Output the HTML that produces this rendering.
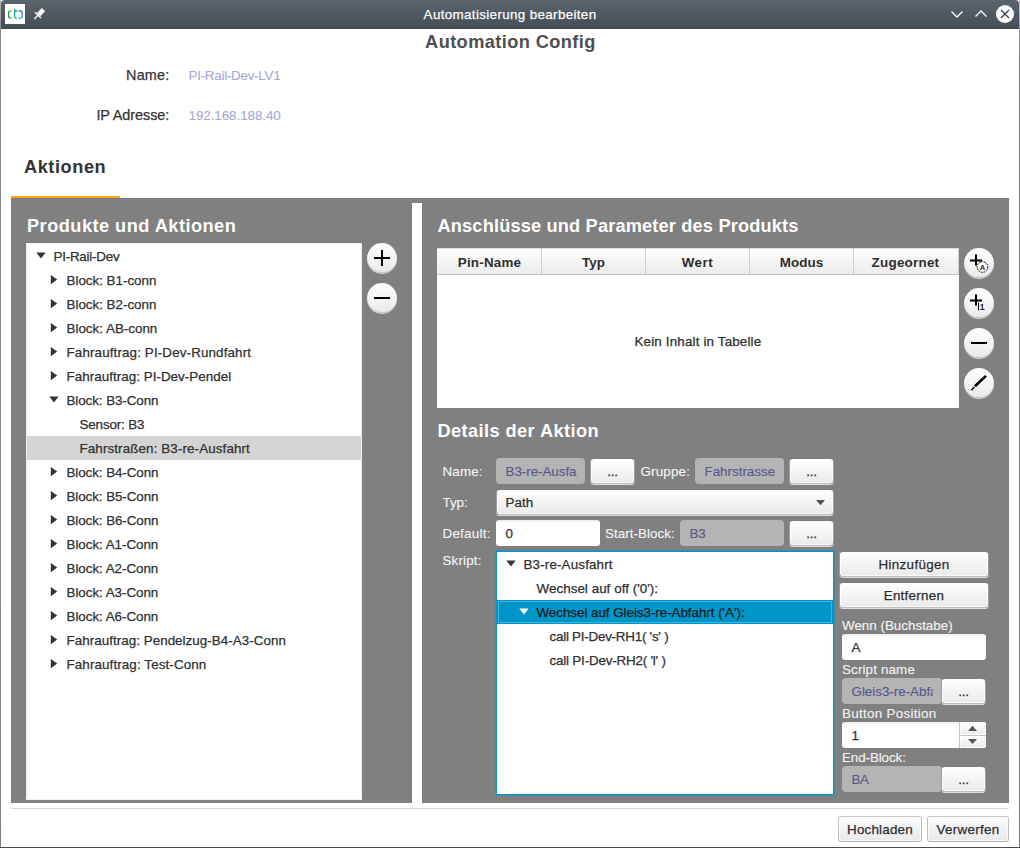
<!DOCTYPE html>
<html lang="de">
<head>
<meta charset="utf-8">
<title>Automatisierung bearbeiten</title>
<style>
*{box-sizing:border-box;margin:0;padding:0}
html,body{width:1020px;height:848px;overflow:hidden;background:#fff}
body{font-family:"Liberation Sans","DejaVu Sans",sans-serif;font-size:13.4px;color:#303030;position:relative}
#win{position:absolute;left:0;top:0;width:1020px;height:848px;background:#fff;overflow:hidden}
#win div,#win span,#win svg,#win button,#win h1,#win h2,#win label,#win output{position:absolute}
header,main,section,nav,footer,form{display:block;position:static}
button{font:inherit;color:inherit;display:block;text-align:left;cursor:default;outline:0;-webkit-appearance:none;appearance:none}
.t{white-space:pre;line-height:20px;height:20px;-webkit-text-stroke:.25px}
.titlebar-bg{left:1px;top:0;width:1018px;height:28px;background:linear-gradient(#5a646c,#464e56);border-radius:4px 4px 0 0}
.split{left:11px;top:198px;width:998px;height:605px;background:#808080}
.divider{left:412px;top:203px;width:10px;height:600px;background:#fff}
.tree{background:#fff}
.row{left:0;height:24px}
.fld{height:26px;border-radius:4px}
.fld.dis{background:#b4b4b4}
.fld.en{background:linear-gradient(#ececec,#fff 3px);border-radius:3px}
.btn{height:26px;border-radius:4px;background:linear-gradient(#ffffff,#f5f5f5 45%,#eaeaea);border:1px solid;border-color:#7c7c7c #9c9c9c #bdbdbd #9c9c9c;box-shadow:0 1px 0 #dedede,inset 1px 0 0 rgba(255,255,255,.9),inset -1px 0 0 rgba(255,255,255,.9),inset 0 -1px 0 rgba(255,255,255,.7)}
.btn.w{border-color:#c8c8c8 #c0c0c0 #b6b6b6 #c0c0c0;box-shadow:inset 0 0 0 1px rgba(255,255,255,.7);background:linear-gradient(#fdfdfd,#f3f3f3 45%,#e9e9e9);border-radius:3px}
.circ{width:30px;height:30px;border:0;border-radius:50%;background:linear-gradient(#ffffff,#f7f7f7 40%,#e9e9e9);box-shadow:0 1px 0 rgba(228,228,228,.95),inset 0 -1px 1px -.5px rgba(110,110,110,.45),0 0 0 .5px rgba(120,120,120,.5)}
.circ svg{left:0;top:0}
.thead{left:0;top:0;width:522px;height:27px;background:linear-gradient(#fdfdfd,#ececec);border-bottom:1px solid #c4c4c4;border-top:1px solid #dcdcdc}
.th{top:0;height:25px;border-right:1px solid #cdcdcd}
.spin-up{left:117px;top:0;width:27px;height:13px;background:linear-gradient(#ffffff,#ececec);border-left:1px solid #c6c6c6;border-radius:0 3px 0 0;box-shadow:inset 0 0 0 1px rgba(255,255,255,.8)}
.spin-sep{left:117px;top:13px;width:27px;height:1px;background:#c6c6c6}
.spin-dn{left:117px;top:14px;width:27px;height:12px;background:linear-gradient(#fdfdfd,#ebebeb);border-left:1px solid #c6c6c6;border-radius:0 0 3px 0;box-shadow:inset 0 0 0 1px rgba(255,255,255,.8)}
</style>
</head>
<body>
<div id="win">

<!-- window title bar -->
<header>
<div class="titlebar-bg"></div>
<div style="left:1px;top:28px;width:1018px;height:1px;background:#3f4951"></div>
<div style="left:5px;top:4px;width:20px;height:20px;background:#fff">
<svg style="left:0;top:0" width="20" height="20" viewBox="0 0 20 20">
<defs><linearGradient id="gG" x1="0" y1="0" x2="1" y2="0"><stop offset="0" stop-color="#2b8a3e"/><stop offset="1" stop-color="#9bcf4a"/></linearGradient>
<linearGradient id="gB" x1="0" y1="0" x2="0" y2="1"><stop offset="0" stop-color="#1763bd"/><stop offset="1" stop-color="#2badea"/></linearGradient></defs>
<path d="M7 6.900H5.600A2 2 0 0 0 3.600 8.900V12.100A2 2 0 0 0 5.600 14.100H7" fill="none" stroke="url(#gG)" stroke-width="1.300"/>
<path d="M9.600 5V12.600A1.500 1.500 0 0 0 11.100 14.100H11.700M9.600 7H12.400" fill="none" stroke="#1f9c8e" stroke-width="1.300"/>
<path d="M13.600 6.900H15.200A2 2 0 0 1 17.200 8.900V12.100A2 2 0 0 1 15.200 14.100H13.200" fill="none" stroke="url(#gB)" stroke-width="1.300"/>
</svg>
</div>
<svg style="left:33px;top:7px" width="14" height="14" viewBox="0 0 14 14">
<path d="M8.900 1.100L12.100 4.200L7.300 9.200L4 6Z" fill="#fcfcfc"/>
<path d="M2 5.300L8 11" stroke="#fcfcfc" stroke-width="1.400"/>
<path d="M5 8.200L1.200 12" stroke="#fcfcfc" stroke-width="1.300"/>
</svg>
<span class="t" style="left:423.6px;top:5.0px;font-size:13.4px;letter-spacing:0.35px;color:#fcfcfc;font-weight:normal">Automatisierung bearbeiten</span>
<svg style="left:945px;top:2px" width="72" height="24" viewBox="0 0 72 24">
<path d="M6.500 9.500L12 15L17.500 9.500" fill="none" stroke="#fcfcfc" stroke-width="1.300"/>
<path d="M30.500 14.500L36 9L41.500 14.500" fill="none" stroke="#fcfcfc" stroke-width="1.300"/>
<circle cx="60" cy="12" r="9" fill="#fcfcfc"/>
<path d="M56 8L64 16M64 8L56 16" stroke="#3b4249" stroke-width="1.300"/>
</svg>
</header>
<!-- window frame edges -->
<div style="left:0;top:0;width:1px;height:848px;background:linear-gradient(#bdbdbd,#8a8a8a 30px,#808080)"></div>
<div style="left:1019px;top:0;width:1px;height:848px;background:linear-gradient(#c4c4c4,#9a9a9a 28px,#7c7c7c 60px,#7c7c7c)"></div>
<div style="left:0;top:847px;width:1020px;height:1px;background:#4a4a4a"></div>

<main>
<!-- dialog header -->
<section>
<h1 class="t" style="left:425.1px;top:31.5px;font-size:18.2px;letter-spacing:0.41px;color:#4f4f4f;font-weight:bold;-webkit-text-stroke:0px">Automation Config</h1>
<label class="t" style="left:126.1px;top:65.0px;font-size:14.4px;letter-spacing:0.17px;color:#333;font-weight:normal">Name:</label>
<output class="t" style="left:188.5px;top:66.0px;font-size:13.4px;letter-spacing:-0.26px;color:#a8a8d4;font-weight:normal;-webkit-text-stroke:0.1px">PI-Rail-Dev-LV1</output>
<label class="t" style="left:96.4px;top:105.0px;font-size:14.4px;letter-spacing:-0.04px;color:#333;font-weight:normal">IP Adresse:</label>
<output class="t" style="left:188.5px;top:106.0px;font-size:13.4px;letter-spacing:-0.06px;color:#a8a8d4;font-weight:normal;-webkit-text-stroke:0.1px">192.168.188.40</output>
</section>

<!-- tab header -->
<nav>
<span class="t" style="left:24.0px;top:157.0px;font-size:18.2px;letter-spacing:0.55px;color:#333;font-weight:bold;-webkit-text-stroke:0px">Aktionen</span>
<div style="left:11px;top:196px;width:109px;height:2px;background:#fba30a"></div>
</nav>

<!-- split pane -->
<div class="split"></div>
<div class="divider"></div>

<!-- left: product tree -->
<section>
<h2 class="t" style="left:27.0px;top:216.0px;font-size:18.2px;letter-spacing:0.47px;color:#fff;font-weight:bold;-webkit-text-stroke:0px">Produkte und Aktionen</h2>
<div class="tree" style="left:26px;top:243px;width:336px;height:557px;border:1px solid #f0f0f0">
<div class="row" style="top:0px;width:334px">
<svg width="12" height="13" style="left:8px;top:5px"><path d="M1.300 3.600H10.600L5.950 9.500Z" fill="#333"/></svg>
<span class="t" style="left:26.5px;top:3.0px;font-size:13.4px;letter-spacing:-0.23px;color:#303030;font-weight:normal">PI-Rail-Dev</span>
</div>
<div class="row" style="top:24px;width:334px">
<svg width="12" height="13" style="left:21px;top:5px"><path d="M2.800 1.900V11.200L9.200 6.550Z" fill="#333"/></svg>
<span class="t" style="left:39.5px;top:3.0px;font-size:13.4px;letter-spacing:-0.01px;color:#303030;font-weight:normal">Block: B1-conn</span>
</div>
<div class="row" style="top:48px;width:334px">
<svg width="12" height="13" style="left:21px;top:5px"><path d="M2.800 1.900V11.200L9.200 6.550Z" fill="#333"/></svg>
<span class="t" style="left:39.5px;top:3.0px;font-size:13.4px;letter-spacing:-0.01px;color:#303030;font-weight:normal">Block: B2-conn</span>
</div>
<div class="row" style="top:72px;width:334px">
<svg width="12" height="13" style="left:21px;top:5px"><path d="M2.800 1.900V11.200L9.200 6.550Z" fill="#333"/></svg>
<span class="t" style="left:39.5px;top:3.0px;font-size:13.4px;letter-spacing:0.00px;color:#303030;font-weight:normal">Block: AB-conn</span>
</div>
<div class="row" style="top:96px;width:334px">
<svg width="12" height="13" style="left:21px;top:5px"><path d="M2.800 1.900V11.200L9.200 6.550Z" fill="#333"/></svg>
<span class="t" style="left:39.5px;top:3.0px;font-size:13.4px;letter-spacing:0.13px;color:#303030;font-weight:normal">Fahrauftrag: PI-Dev-Rundfahrt</span>
</div>
<div class="row" style="top:120px;width:334px">
<svg width="12" height="13" style="left:21px;top:5px"><path d="M2.800 1.900V11.200L9.200 6.550Z" fill="#333"/></svg>
<span class="t" style="left:39.5px;top:3.0px;font-size:13.4px;letter-spacing:0.04px;color:#303030;font-weight:normal">Fahrauftrag: PI-Dev-Pendel</span>
</div>
<div class="row" style="top:144px;width:334px">
<svg width="12" height="13" style="left:21px;top:5px"><path d="M1.300 3.600H10.600L5.950 9.500Z" fill="#333"/></svg>
<span class="t" style="left:39.5px;top:3.0px;font-size:13.4px;letter-spacing:-0.08px;color:#303030;font-weight:normal">Block: B3-Conn</span>
</div>
<div class="row" style="top:168px;width:334px">
<span class="t" style="left:52.5px;top:3.0px;font-size:13.4px;letter-spacing:-0.15px;color:#303030;font-weight:normal">Sensor: B3</span>
</div>
<div class="row" style="top:192px;width:334px;background:#d4d4d4">
<span class="t" style="left:52.5px;top:3.0px;font-size:13.4px;letter-spacing:0.11px;color:#303030;font-weight:normal">Fahrstraßen: B3-re-Ausfahrt</span>
</div>
<div class="row" style="top:216px;width:334px">
<svg width="12" height="13" style="left:21px;top:5px"><path d="M2.800 1.900V11.200L9.200 6.550Z" fill="#333"/></svg>
<span class="t" style="left:39.5px;top:3.0px;font-size:13.4px;letter-spacing:-0.08px;color:#303030;font-weight:normal">Block: B4-Conn</span>
</div>
<div class="row" style="top:240px;width:334px">
<svg width="12" height="13" style="left:21px;top:5px"><path d="M2.800 1.900V11.200L9.200 6.550Z" fill="#333"/></svg>
<span class="t" style="left:39.5px;top:3.0px;font-size:13.4px;letter-spacing:-0.08px;color:#303030;font-weight:normal">Block: B5-Conn</span>
</div>
<div class="row" style="top:264px;width:334px">
<svg width="12" height="13" style="left:21px;top:5px"><path d="M2.800 1.900V11.200L9.200 6.550Z" fill="#333"/></svg>
<span class="t" style="left:39.5px;top:3.0px;font-size:13.4px;letter-spacing:-0.08px;color:#303030;font-weight:normal">Block: B6-Conn</span>
</div>
<div class="row" style="top:288px;width:334px">
<svg width="12" height="13" style="left:21px;top:5px"><path d="M2.800 1.900V11.200L9.200 6.550Z" fill="#333"/></svg>
<span class="t" style="left:39.5px;top:3.0px;font-size:13.4px;letter-spacing:-0.04px;color:#303030;font-weight:normal">Block: A1-Conn</span>
</div>
<div class="row" style="top:312px;width:334px">
<svg width="12" height="13" style="left:21px;top:5px"><path d="M2.800 1.900V11.200L9.200 6.550Z" fill="#333"/></svg>
<span class="t" style="left:39.5px;top:3.0px;font-size:13.4px;letter-spacing:-0.04px;color:#303030;font-weight:normal">Block: A2-Conn</span>
</div>
<div class="row" style="top:336px;width:334px">
<svg width="12" height="13" style="left:21px;top:5px"><path d="M2.800 1.900V11.200L9.200 6.550Z" fill="#333"/></svg>
<span class="t" style="left:39.5px;top:3.0px;font-size:13.4px;letter-spacing:-0.04px;color:#303030;font-weight:normal">Block: A3-Conn</span>
</div>
<div class="row" style="top:360px;width:334px">
<svg width="12" height="13" style="left:21px;top:5px"><path d="M2.800 1.900V11.200L9.200 6.550Z" fill="#333"/></svg>
<span class="t" style="left:39.5px;top:3.0px;font-size:13.4px;letter-spacing:-0.04px;color:#303030;font-weight:normal">Block: A6-Conn</span>
</div>
<div class="row" style="top:384px;width:334px">
<svg width="12" height="13" style="left:21px;top:5px"><path d="M2.800 1.900V11.200L9.200 6.550Z" fill="#333"/></svg>
<span class="t" style="left:39.5px;top:3.0px;font-size:13.4px;letter-spacing:0.04px;color:#303030;font-weight:normal">Fahrauftrag: Pendelzug-B4-A3-Conn</span>
</div>
<div class="row" style="top:408px;width:334px">
<svg width="12" height="13" style="left:21px;top:5px"><path d="M2.800 1.900V11.200L9.200 6.550Z" fill="#333"/></svg>
<span class="t" style="left:39.5px;top:3.0px;font-size:13.4px;letter-spacing:0.11px;color:#303030;font-weight:normal">Fahrauftrag: Test-Conn</span>
</div>
</div>
<button type="button" class="circ" title="+" style="left:367px;top:243px"><svg width="30" height="30"><path d="M7 15H23M15 7V23" stroke="#000" stroke-width="2" fill="none"/></svg></button>
<button type="button" class="circ" title="-" style="left:367px;top:283px"><svg width="30" height="30"><path d="M7 15H23" stroke="#000" stroke-width="2"/></svg></button>
</section>

<!-- right: pin table -->
<section>
<h2 class="t" style="left:437.5px;top:216.0px;font-size:18.2px;letter-spacing:0.17px;color:#fff;font-weight:bold;-webkit-text-stroke:0px">Anschlüsse und Parameter des Produkts</h2>
<div style="left:437px;top:248px;width:522px;height:160px;background:#fff">
<div class="thead">
<div class="th" style="left:0px;width:105px"><span class="t" style="left:20.8px;top:4.0px;font-size:13.4px;letter-spacing:0.20px;color:#2e2e2e;font-weight:bold;-webkit-text-stroke:0px">Pin-Name</span></div>
<div class="th" style="left:104px;width:105px"><span class="t" style="left:41.1px;top:4.0px;font-size:13.4px;letter-spacing:0.03px;color:#2e2e2e;font-weight:bold;-webkit-text-stroke:0px">Typ</span></div>
<div class="th" style="left:208px;width:105px"><span class="t" style="left:36.7px;top:4.0px;font-size:13.4px;letter-spacing:0.50px;color:#2e2e2e;font-weight:bold;-webkit-text-stroke:0px">Wert</span></div>
<div class="th" style="left:312px;width:105px"><span class="t" style="left:30.7px;top:4.0px;font-size:13.4px;letter-spacing:0.09px;color:#2e2e2e;font-weight:bold;-webkit-text-stroke:0px">Modus</span></div>
<div class="th" style="left:416px;width:106px"><span class="t" style="left:18.6px;top:4.0px;font-size:13.4px;letter-spacing:0.25px;color:#2e2e2e;font-weight:bold;-webkit-text-stroke:0px">Zugeornet</span></div>
</div>
<span class="t" style="left:197.5px;top:84.0px;font-size:13.4px;letter-spacing:0.16px;color:#2e2e2e;font-weight:normal">Kein Inhalt in Tabelle</span>
</div>
<button type="button" class="circ" title="+A" style="left:964px;top:248px"><svg width="30" height="30"><path d="M6 12.5H18M12 6.5V17.5" stroke="#000" stroke-width="2" fill="none"/><circle cx="18.500" cy="19" r="5.300" fill="#fff" stroke="#000" stroke-width="1" stroke-dasharray="1.700 .9"/><text x="18.500" y="21.800" font-size="7.500" text-anchor="middle" font-family="Liberation Sans,sans-serif" fill="#000" stroke="#000" stroke-width=".2">A</text></svg></button>
<button type="button" class="circ" title="+1" style="left:964px;top:288px"><svg width="30" height="30"><path d="M6 12.5H18M12 6.5V17.5" stroke="#000" stroke-width="2" fill="none"/><rect x="13.500" y="14" width="7" height="9" fill="#fafafa"/><path d="M14.500 14.500V22.500" stroke="#000" stroke-width="1"/><text x="18.200" y="21.500" font-size="9.500" text-anchor="middle" font-family="Liberation Sans,sans-serif" fill="#000" stroke="#000" stroke-width=".2">1</text></svg></button>
<button type="button" class="circ" title="-" style="left:964px;top:328px"><svg width="30" height="30"><path d="M7 15H23" stroke="#000" stroke-width="2"/></svg></button>
<button type="button" class="circ" title="edit" style="left:964px;top:368px"><svg width="30" height="30"><path d="M10.900 18.300L22 7.900" stroke="#000" stroke-width="2.600"/><path d="M7.300 22.300L10.300 19.100" stroke="#000" stroke-width="1.400"/></svg></button>
</section>

<!-- right: action details -->
<section>
<h2 class="t" style="left:437.5px;top:421.0px;font-size:18.2px;letter-spacing:0.42px;color:#fff;font-weight:bold;-webkit-text-stroke:0px">Details der Aktion</h2>
<label class="t" style="left:442.5px;top:462.0px;font-size:13.4px;letter-spacing:0.14px;color:#f6f6f6;font-weight:normal;-webkit-text-stroke:0.1px">Name:</label>
<div class="fld dis" style="left:496px;top:458px;width:89px"><span class="t" style="left:9.5px;top:4.0px;font-size:13.4px;letter-spacing:-0.04px;color:#57578c;font-weight:normal;-webkit-text-stroke:0.1px;width:71.5px;overflow:hidden">B3-re-Ausfahrt</span></div>
<button type="button" class="btn" style="left:590px;top:458px;width:45px;height:26px"><span class="t" style="left:16.3px;top:3.0px;font-size:13.4px;letter-spacing:-0.24px;color:#2e2e2e;font-weight:normal">...</span></button>
<label class="t" style="left:640.4px;top:462.0px;font-size:13.4px;letter-spacing:0.19px;color:#f6f6f6;font-weight:normal;-webkit-text-stroke:0.1px">Gruppe:</label>
<div class="fld dis" style="left:695px;top:458px;width:89px"><span class="t" style="left:9.5px;top:4.0px;font-size:13.4px;letter-spacing:-0.01px;color:#57578c;font-weight:normal;-webkit-text-stroke:0.1px">Fahrstrasse</span></div>
<button type="button" class="btn" style="left:789px;top:458px;width:45px;height:26px"><span class="t" style="left:16.3px;top:3.0px;font-size:13.4px;letter-spacing:-0.24px;color:#2e2e2e;font-weight:normal">...</span></button>
<label class="t" style="left:442.5px;top:493.0px;font-size:13.4px;letter-spacing:-0.06px;color:#f6f6f6;font-weight:normal;-webkit-text-stroke:0.1px">Typ:</label>
<div class="btn" style="left:496px;top:489px;width:338px"><span class="t" style="left:8.5px;top:3.0px;font-size:13.4px;letter-spacing:0.09px;color:#2e2e2e;font-weight:normal">Path</span><svg width="12" height="8" style="left:318px;top:9px"><path d="M1 1H10L5.500 6.300Z" fill="#555"/></svg></div>
<label class="t" style="left:442.5px;top:524.0px;font-size:13.4px;letter-spacing:0.25px;color:#f6f6f6;font-weight:normal;-webkit-text-stroke:0.1px">Default:</label>
<div class="fld en" style="left:496px;top:520px;width:104px"><span class="t" style="left:9.5px;top:4.0px;font-size:13.4px;letter-spacing:-0.02px;color:#303030;font-weight:normal">0</span></div>
<label class="t" style="left:605.0px;top:524.0px;font-size:13.4px;letter-spacing:0.04px;color:#f6f6f6;font-weight:normal;-webkit-text-stroke:0.1px">Start-Block:</label>
<div class="fld dis" style="left:680px;top:520px;width:104px"><span class="t" style="left:9.5px;top:4.0px;font-size:13.4px;letter-spacing:-0.25px;color:#57578c;font-weight:normal;-webkit-text-stroke:0.1px">B3</span></div>
<button type="button" class="btn" style="left:789px;top:520px;width:45px;height:26px"><span class="t" style="left:16.3px;top:3.0px;font-size:13.4px;letter-spacing:-0.24px;color:#2e2e2e;font-weight:normal">...</span></button>
<label class="t" style="left:442.5px;top:551.0px;font-size:13.4px;letter-spacing:0.15px;color:#f6f6f6;font-weight:normal;-webkit-text-stroke:0.1px">Skript:</label>
<div class="tree" style="left:496px;top:551px;width:338px;height:244px;border:1px solid #0096c9;box-shadow:0 0 0 1px rgba(0,150,201,.45)">
<div class="row" style="top:0px;width:336px">
<svg width="12" height="13" style="left:8px;top:5px"><path d="M1.300 3.600H10.600L5.950 9.500Z" fill="#333"/></svg>
<span class="t" style="left:26.5px;top:3.0px;font-size:13.4px;letter-spacing:0.15px;color:#303030;font-weight:normal">B3-re-Ausfahrt</span>
</div>
<div class="row" style="top:24px;width:336px">
<span class="t" style="left:39.5px;top:3.0px;font-size:13.4px;letter-spacing:0.04px;color:#303030;font-weight:normal">Wechsel auf off (&#x27;0&#x27;):</span>
</div>
<div class="row" style="top:48px;width:336px;background:#0096c9">
<div style="left:1px;top:1px;width:334px;height:22px;border:1px solid rgba(255,255,255,.28)"></div>
<svg width="12" height="13" style="left:21px;top:5px"><path d="M1.300 3.600H10.600L5.950 9.500Z" fill="#fff"/></svg>
<span class="t" style="left:39.5px;top:3.0px;font-size:13.4px;letter-spacing:-0.04px;color:#1a1a1a;font-weight:normal">Wechsel auf Gleis3-re-Abfahrt (&#x27;A&#x27;):</span>
</div>
<div class="row" style="top:72px;width:336px">
<span class="t" style="left:52.5px;top:3.0px;font-size:13.4px;letter-spacing:-0.24px;color:#303030;font-weight:normal">call PI-Dev-RH1( &#x27;s&#x27; )</span>
</div>
<div class="row" style="top:96px;width:336px">
<span class="t" style="left:52.5px;top:3.0px;font-size:13.4px;letter-spacing:-0.19px;color:#303030;font-weight:normal">call PI-Dev-RH2( &#x27;l&#x27; )</span>
</div>
</div>
<button type="button" class="btn" style="left:839px;top:551px;width:150px;height:26px"><span class="t" style="left:38.5px;top:3.0px;font-size:13.4px;letter-spacing:0.33px;color:#2e2e2e;font-weight:normal">Hinzufügen</span></button>
<button type="button" class="btn" style="left:839px;top:582px;width:150px;height:26px"><span class="t" style="left:43.7px;top:3.0px;font-size:13.4px;letter-spacing:0.27px;color:#2e2e2e;font-weight:normal">Entfernen</span></button>
<label class="t" style="left:842.0px;top:616.0px;font-size:13.4px;letter-spacing:0.00px;color:#f6f6f6;font-weight:normal;-webkit-text-stroke:0.1px">Wenn (Buchstabe)</label>
<div class="fld en" style="left:842px;top:634px;width:144px"><span class="t" style="left:9.5px;top:4.0px;font-size:13.4px;letter-spacing:-0.62px;color:#303030;font-weight:normal">A</span></div>
<label class="t" style="left:842.0px;top:660.0px;font-size:13.4px;letter-spacing:0.14px;color:#f6f6f6;font-weight:normal;-webkit-text-stroke:0.1px">Script name</label>
<div class="fld dis" style="left:842px;top:678px;width:100px"><span class="t" style="left:9.5px;top:4.0px;font-size:13.4px;letter-spacing:-0.02px;color:#57578c;font-weight:normal;-webkit-text-stroke:0.1px;width:81.3px;overflow:hidden">Gleis3-re-Abfahrt</span></div>
<button type="button" class="btn" style="left:941px;top:678px;width:45px;height:26px"><span class="t" style="left:16.3px;top:3.0px;font-size:13.4px;letter-spacing:-0.24px;color:#2e2e2e;font-weight:normal">...</span></button>
<label class="t" style="left:842.0px;top:704.0px;font-size:13.4px;letter-spacing:0.29px;color:#f6f6f6;font-weight:normal;-webkit-text-stroke:0.1px">Button Position</label>
<div class="fld en" style="left:842px;top:722px;width:144px"><span class="t" style="left:9.5px;top:4.0px;font-size:13.4px;letter-spacing:-0.02px;color:#303030;font-weight:normal">1</span><div class="spin-up"><svg width="12" height="7" style="left:7px;top:3px"><path d="M1.100 5.900H10L5.550 .800Z" fill="#555"/></svg></div><div class="spin-sep"></div><div class="spin-dn"><svg width="12" height="7" style="left:7px;top:2px"><path d="M1.100 1.100H10L5.550 6Z" fill="#555"/></svg></div></div>
<label class="t" style="left:842.0px;top:748.0px;font-size:13.4px;letter-spacing:-0.10px;color:#f6f6f6;font-weight:normal;-webkit-text-stroke:0.1px">End-Block:</label>
<div class="fld dis" style="left:842px;top:766px;width:100px"><span class="t" style="left:9.5px;top:4.0px;font-size:13.4px;letter-spacing:-0.55px;color:#57578c;font-weight:normal;-webkit-text-stroke:0.1px">BA</span></div>
<button type="button" class="btn" style="left:941px;top:766px;width:45px;height:26px"><span class="t" style="left:16.3px;top:3.0px;font-size:13.4px;letter-spacing:-0.24px;color:#2e2e2e;font-weight:normal">...</span></button>
</section>
</main>

<!-- dialog buttons -->
<footer>
<div style="left:11px;top:808px;width:998px;height:1px;background:#d8d8d8"></div>
<button type="button" class="btn w" style="left:838px;top:816px;width:84px;height:26px"><span class="t" style="left:8.1px;top:3.0px;font-size:13.4px;letter-spacing:0.19px;color:#2e2e2e;font-weight:normal">Hochladen</span></button>
<button type="button" class="btn w" style="left:927px;top:816px;width:82px;height:26px"><span class="t" style="left:8.5px;top:3.0px;font-size:13.4px;letter-spacing:0.30px;color:#2e2e2e;font-weight:normal">Verwerfen</span></button>
</footer>
</div>
</body>
</html>
